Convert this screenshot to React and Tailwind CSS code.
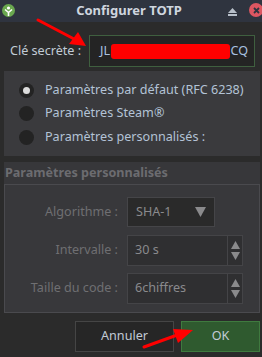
import React from "react";

// Small radio button, like the Qt dark theme ones
const Radio = ({ checked, label }) => (
    <div className="flex items-center h-[23.5px]">
        <div className="w-[15px] h-[15px] rounded-full bg-[#232323] flex items-center justify-center ml-[15px]">
            {checked && <div className="w-[7px] h-[7px] rounded-full bg-[#dcdcdc]" />}
        </div>
        <span className="ml-[11px] text-[12.6px] text-[#b3c3d6]">{label}</span>
    </div>
);

// Up / down arrows of a spin box
const SpinArrows = () => (
    <div className="w-[15px] border-l border-[#444447] flex flex-col items-center justify-center gap-[3px]">
        <svg width="9" height="8" viewBox="0 0 9 8"><path d="M4.5 0L9 8H0z" fill="#8a8a8c" /></svg>
        <svg width="9" height="8" viewBox="0 0 9 8"><path d="M0 0H9L4.5 8z" fill="#8a8a8c" /></svg>
    </div>
);

const FieldRow = ({ label, children }) => (
    <div className="flex items-center h-[38px]">
        <span className="w-[114px] text-right pr-[1px] text-[12.6px] text-[#6f6f72]">{label}</span>
        <div className="ml-[8px] flex">{children}</div>
    </div>
);

const App = () => {
    return (
        <div
            className="relative w-[262px] h-[357px] bg-[#2b2b2b] overflow-hidden"
            style={{ fontFamily: '"Noto Sans", "Open Sans", sans-serif' }}
        >
            {/* Title bar */}
            <div className="h-[22px] bg-[#2f343f] flex items-center relative">
                <div className="absolute left-[2px] top-[4px] w-[13px] h-[13px] rounded-full bg-[#6aa84f] flex items-center justify-center">
                    <svg width="9" height="10" viewBox="0 0 9 10">
                        <circle cx="4.5" cy="2" r="1.6" fill="#fff" />
                        <path d="M1 3.5 L4.5 6.5 L8 3.5 M4.5 6 V10" stroke="#fff" strokeWidth="1.6" fill="none" />
                    </svg>
                </div>
                <div className="flex-1 text-center text-[13px] font-bold text-[#cfd6df] pr-[4px]">Configurer TOTP</div>
                <svg className="absolute left-[228px] top-[8px]" width="9" height="8" viewBox="0 0 9 8">
                    <path d="M4.5 0L9 5H0z" fill="#b8c0ca" />
                    <rect x="0" y="6" width="9" height="2" fill="#b8c0ca" />
                </svg>
                <div className="absolute left-[249px] top-[3px] w-[14px] h-[14px] rounded-full bg-[#dd5661] flex items-center justify-center">
                    <svg width="7" height="7" viewBox="0 0 7 7">
                        <path d="M1 1L6 6M6 1L1 6" stroke="#2f343f" strokeWidth="1.8" />
                    </svg>
                </div>
            </div>

            {/* Secret key row */}
            <div className="flex items-center mt-[13px] h-[32px]">
                <span className="ml-[10px] w-[79px] text-[12.6px] text-[#c2cbd6]">Clé secrète :</span>
                <div className="w-[166px] h-[32px] border border-[#3f5f3f] bg-[#242424] flex items-center pl-[10px] pr-[6px] text-[12.6px] text-[#a9c1e0]">
                    <span>JL</span>
                    <div className="ml-[1px] w-[121px] h-[15px] bg-[#ff0000] rounded-[3px]" />
                    <span>CQ</span>
                </div>
            </div>

            {/* Radio group */}
            <div className="mt-[4px] ml-[4px] w-[256px] h-[85px] bg-[#3a3a3d] flex flex-col justify-center">
                <Radio checked label="Paramètres par défaut (RFC 6238)" />
                <Radio label="Paramètres Steam®" />
                <Radio label="Paramètres personnalisés :" />
            </div>

            {/* Custom settings group (disabled) */}
            <div className="mt-[6px] ml-[4px] w-[256px] bg-[#37373a] flex flex-col">
                <div className="h-[23px] flex items-center text-[12.6px] font-bold text-[#6c6c70] pl-[1px] border-b border-[#4a4a4e]">
                    Paramètres personnalisés
                </div>
                <div className="h-[128px] border-x border-b border-[#4a4a4e] bg-[#38383b] flex flex-col pt-[8px]">
                    <FieldRow label="Algorithme :">
                        <div className="w-[88px] h-[30px] bg-[#2a2a2a] border border-[#454548] flex items-center justify-between pl-[8px] pr-[8px] text-[12.6px] text-[#8a8a8d]">
                            <span>SHA-1</span>
                            <svg width="11" height="10" viewBox="0 0 11 10"><path d="M0 0H11L5.5 10z" fill="#8a8a8c" /></svg>
                        </div>
                    </FieldRow>
                    <FieldRow label="Intervalle :">
                        <div className="w-[116px] h-[31px] bg-[#2f2f31] border border-[#444447] flex text-[12.6px] text-[#8a8a8d]">
                            <span className="flex-1 flex items-center pl-[7px]">30 s</span>
                            <SpinArrows />
                        </div>
                    </FieldRow>
                    <FieldRow label="Taille du code :">
                        <div className="w-[116px] h-[31px] bg-[#2f2f31] border border-[#444447] flex text-[12.6px] text-[#8a8a8d]">
                            <span className="flex-1 flex items-center pl-[7px]">6chiffres</span>
                            <SpinArrows />
                        </div>
                    </FieldRow>
                </div>
            </div>

            {/* Buttons */}
            <div className="mt-[8px] flex justify-end gap-[7px] pr-[2px]">
                <button className="w-[99px] h-[31px] bg-[#262626] border border-[#454545] text-[12.6px] text-[#c2cbd6]">Annuler</button>
                <button className="w-[79px] h-[31px] bg-[#2f5a2f] border border-[#3f7a3f] text-[12.6px] text-[#c2cbd6]">OK</button>
            </div>

            {/* Red annotation arrows */}
            <svg className="absolute left-0 top-0 pointer-events-none" width="262" height="357">
                <path d="M38 20 L76 40" stroke="#ff0000" strokeWidth="3" strokeLinecap="round" />
                <path d="M86 46 L69 44 L78 32 z" fill="#ff0000" />
                <path d="M144 347 L180 334" stroke="#ff0000" strokeWidth="3" strokeLinecap="round" />
                <path d="M193 330 L178 343 L173 329 z" fill="#ff0000" />
            </svg>
        </div>
    );
};

export default App;
